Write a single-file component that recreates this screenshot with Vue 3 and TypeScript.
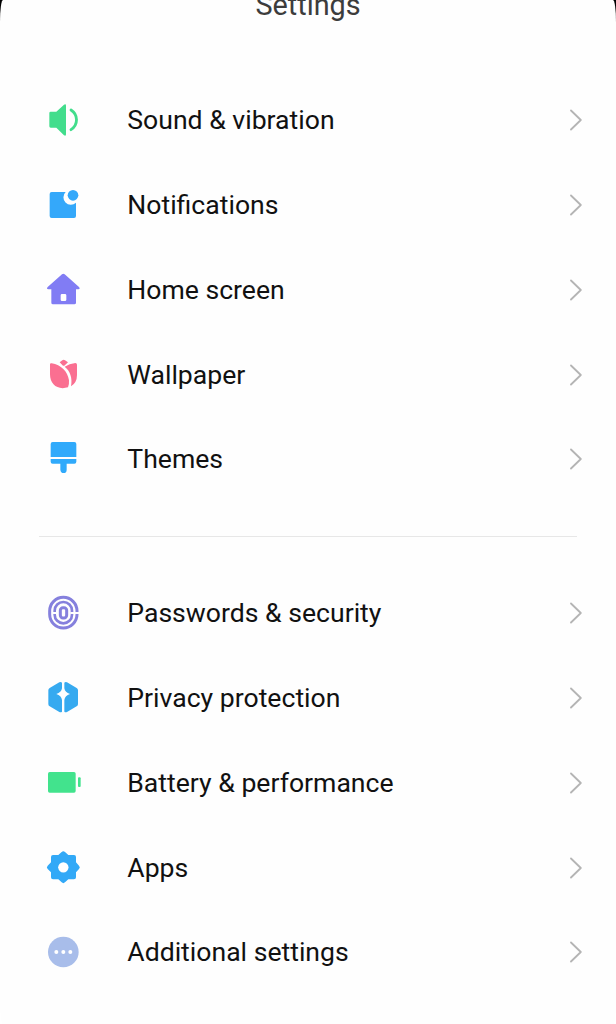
<script setup lang="ts">
type Item = { icon: string; label: string }

const groups: Item[][] = [
  [
    { icon: 'sound', label: 'Sound & vibration' },
    { icon: 'notifications', label: 'Notifications' },
    { icon: 'home', label: 'Home screen' },
    { icon: 'wallpaper', label: 'Wallpaper' },
    { icon: 'themes', label: 'Themes' },
  ],
  [
    { icon: 'passwords', label: 'Passwords & security' },
    { icon: 'privacy', label: 'Privacy protection' },
    { icon: 'battery', label: 'Battery & performance' },
    { icon: 'apps', label: 'Apps' },
    { icon: 'additional', label: 'Additional settings' },
  ],
]
</script>

<template>
  <div class="backdrop">
    <main class="screen">
      <header class="header"><h1>Settings</h1></header>
      <ul v-for="(group, g) in groups" :key="g" class="group">
        <li v-for="item in group" :key="item.icon" class="row">
          <svg class="icon" viewBox="0 0 180 180" aria-hidden="true">
            <g v-if="item.icon === 'sound'">
              <path d="M46 69q0-4 4-4h17l23-21q6-4 6 3v86q0 7-6 3l-23-23H50q-4 0-4-4z" fill="#42dd8c" />
              <path d="M111 60c22 14 22 45 0 59" fill="none" stroke="#42dd8c" stroke-width="8.5" stroke-linecap="round" />
            </g>
            <g v-else-if="item.icon === 'notifications'">
              <path d="M53 51h42a22 22 0 0 0 31 32v40q0 6-6 6H53q-6 0-6-6V57q0-6 6-6z" fill="#34a8fa" />
              <circle cx="117" cy="61" r="16" fill="#34a8fa" />
            </g>
            <path v-else-if="item.icon === 'home'" fill-rule="evenodd" fill="#817cf4" d="M84 43q4-3 8 0l43 38q5 6-2 7h-7v40q0 5-5 5H57q-5 0-5-5V88h-9q-7-1-2-7zM84 102q-4 0-4 4v13q0 4 4 4h9q4 0 4-4v-13q0-4-4-4z" />
            <g v-else-if="item.icon === 'wallpaper'" fill="#fa6f91">
              <path d="M77 52l8-6q4-3 8 0l9 6-11 10q-2 1-4 0z" />
              <path d="M48 58q0-4 5-3c28 5 48 24 52 51q1 11-3 21c-31 9-54-8-54-39z" />
              <path d="M92 65q14-9 32-11 5 0 5 5v31q0 23-18 34c5-25-3-47-19-59z" />
            </g>
            <g v-else-if="item.icon === 'themes'" fill="#30aafb">
              <path d="M56 39h65q6 0 6 6v39H50V45q0-6 6-6z" />
              <path d="M50 90h77v8q0 6-6 6H98v18q0 10-9 10t-10-10v-18H56q-6 0-6-6z" />
            </g>
            <g v-else-if="item.icon === 'passwords'" fill="none" stroke="#8580dd">
              <rect x="47" y="43" width="82" height="92" rx="41" stroke-width="9" />
              <rect x="62" y="57" width="52" height="64" rx="26" stroke-width="8" />
              <rect x="79" y="74" width="19" height="31" rx="8" stroke-width="9" />
              <path d="M55 90h12M109 90h26" stroke="#fff" stroke-width="6" />
            </g>
            <g v-else-if="item.icon === 'privacy'" fill="#36aaf0">
              <path d="M84 44v17q-2 13-17 17 15 5 17 18v35q-3 3-8 1l-29-17q-4-2-4-7V67q0-4 4-7l29-17q5-2 8 1z" />
              <path d="M91 44v17q2 13 17 17-15 5-17 18v35q3 3 8 1l29-17q4-2 4-7V67q0-4-4-7L99 43q-5-2-8 1z" />
            </g>
            <g v-else-if="item.icon === 'battery'" fill="#42e38d">
              <rect x="42" y="57" width="83" height="62" rx="5" />
              <rect x="132" y="73" width="8" height="29" rx="3" />
            </g>
            <g v-else-if="item.icon === 'apps'">
              <path d="M83 42q5-5 10 0l10 9h17q6 0 6 6v16l9 10q5 5 0 10l-9 10v15q0 6-6 6h-17l-10 9q-5 5-10 0l-10-9H57q-6 0-6-6v-15l-10-10q-5-5 0-10l10-10V57q0-6 6-6h16z" fill="#32a9f7" />
              <circle cx="88" cy="88" r="15.5" fill="#fff" />
            </g>
            <g v-else>
              <circle cx="88" cy="90" r="46" fill="#a8bdea" />
              <circle cx="67" cy="90" r="6" fill="#fff" />
              <circle cx="88" cy="90" r="6" fill="#fff" />
              <circle cx="109" cy="90" r="6" fill="#fff" />
            </g>
          </svg>
          <span class="label">{{ item.label }}</span>
          <svg class="chevron" viewBox="0 0 14 24" aria-hidden="true">
            <path d="M3 2.500 12.800 12 3 21.500" />
          </svg>
        </li>
      </ul>
    </main>
  </div>
</template>

<style>
body {
  margin: 0;
  background: #fff;
}
</style>

<style scoped>
.backdrop {
  height: 1024px;
  overflow: hidden;
  background: linear-gradient(#000 0 22px, #fff 22px);
}
.screen {
  box-sizing: border-box;
  height: 1024px;
  background: #fefefe;
  border-radius: 3px / 22px;
  font-family: Roboto, "Noto Sans", sans-serif;
}
.header {
  height: 78px;
  display: flex;
  justify-content: center;
}
h1 {
  margin: -12px 0 0;
  font-size: 28.8px;
  line-height: 34px;
  font-weight: 400;
  color: #3c3c3c;
}
.group {
  list-style: none;
  margin: 0;
  padding: 0;
}
.group + .group {
  margin: 34.2px 39px 0;
  padding-top: 34.1px;
  border-top: 1px solid #e7e7e7;
}
.group + .group .row {
  margin: 0 -39px;
}
.row {
  height: 84.75px;
  display: flex;
  align-items: center;
  padding: 0 34px;
}
.icon {
  width: 60px;
  height: 60px;
  flex: none;
}
.label {
  flex: 1;
  margin-left: 33.3px;
  font-size: 26.6px;
  line-height: 32px;
  color: #111;
  white-space: nowrap;
}
.chevron {
  width: 14px;
  height: 24px;
  flex: none;
}
.chevron path {
  fill: none;
  stroke: #b4b4b4;
  stroke-width: 1.8;
  stroke-linecap: round;
  stroke-linejoin: round;
}
</style>
